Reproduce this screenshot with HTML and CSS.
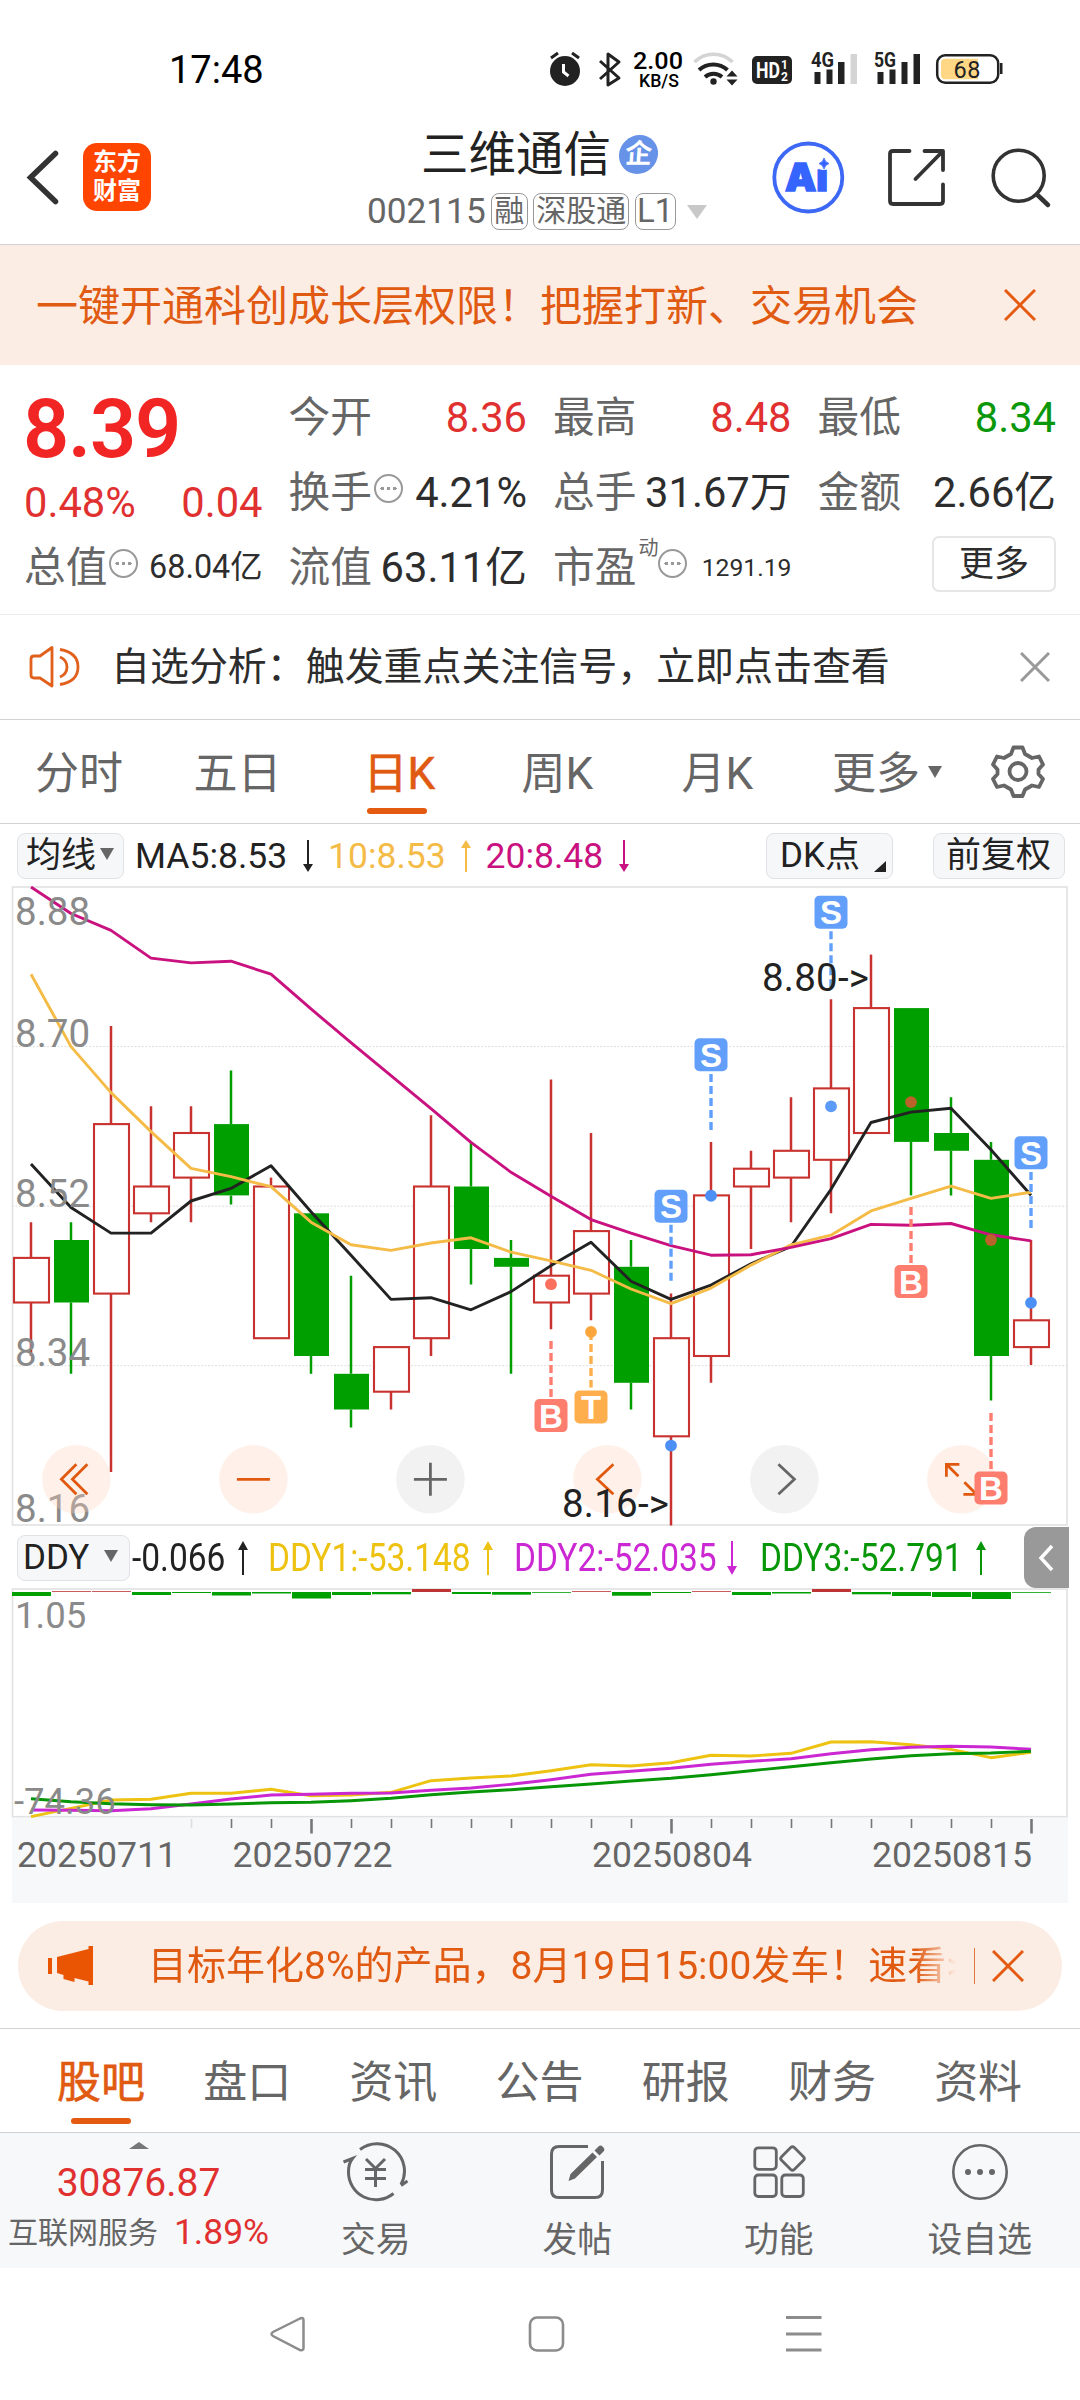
FILE: index.html
```html
<!DOCTYPE html>
<html lang="zh-CN">
<head>
<meta charset="utf-8">
<title>三维通信 002115</title>
<link rel="stylesheet" href="styles.css">
</head>
<body>
<div class="screen">

<div class="status">
  <span class="clock">17:48</span>
  <svg class="status-icons" viewBox="540 44 480 46" width="480" height="46">
    <g fill="#222"><circle cx="565" cy="71" r="15"/></g>
    <path d="M551 58l7-5M579 58l-7-5" stroke="#222" stroke-width="3" fill="none"/>
    <path d="M563.500 64v8l5 4" stroke="#fff" stroke-width="3" fill="none"/>
    <path d="M600 61l19 17-11 7V54l11 8-19 17" stroke="#222" stroke-width="3" fill="none" stroke-linejoin="round"/>
    <text x="633" y="69" font-size="23" font-weight="500" textLength="50" lengthAdjust="spacingAndGlyphs">2.00</text>
    <text x="639" y="87" font-size="18" font-weight="500" textLength="40" lengthAdjust="spacingAndGlyphs">KB/S</text>
    <g fill="none" stroke-width="3.500">
      <path d="M694.500 62a27 27 0 0 1 38 0" stroke="#d4d4d4"/>
      <path d="M699 70a21 21 0 0 1 28.500 0" stroke="#222" stroke-width="4"/>
      <path d="M705 77a13 13 0 0 1 17 0" stroke="#222" stroke-width="4"/>
    </g>
    <circle cx="713.500" cy="81.500" r="3.200" fill="#222"/>
    <path d="M726.500 76.500l5.500-6 5.500 6zM726.500 79.500l5.500 6 5.500-6z" fill="#222"/>
    <rect x="752" y="56" width="40" height="28" rx="5" fill="#222"/>
    <text x="756" y="78" font-size="22" font-weight="700" fill="#fff" textLength="24" lengthAdjust="spacingAndGlyphs">HD</text>
    <text x="781" y="69" font-size="12" font-weight="700" fill="#fff">1</text>
    <text x="781" y="81" font-size="12" font-weight="700" fill="#fff">2</text>
    <g fill="#222">
      <path d="M814.500 72h6v12h-6zM826.500 69.500h6v14.500h-6zM838 62h6.500v22H838z"/>
      <path d="M877.500 72h6v12h-6zM889.500 69.500h6v14.500h-6zM901.500 62h6v22h-6zM913.500 54h6.500v30h-6.500z"/>
    </g>
    <path d="M850.500 54h6.500v30h-6.500z" fill="#d4d4d4"/>
    <text x="811" y="66.500" font-size="19.500" font-weight="700" fill="#222" textLength="23" lengthAdjust="spacingAndGlyphs">4G</text>
    <text x="874" y="66.500" font-size="19.500" font-weight="700" fill="#222" textLength="22" lengthAdjust="spacingAndGlyphs">5G</text>
    <rect x="937.200" y="55.200" width="61" height="27.600" rx="8" fill="#fff" stroke="#222" stroke-width="2.500"/>
    <path d="M945 58.700h33v20.600h-33a4 4 0 0 1-4-4V62.700a4 4 0 0 1 4-4z" fill="#ffd785"/>
    <path d="M1000 63h2.500v11h-2.500z" fill="#222"/>
    <text x="953.500" y="78" font-size="23.500" fill="#222" textLength="27">68</text>
  </svg>
</div>

<header class="header">
  <svg viewBox="20 143 50 68" width="50" height="68"><path d="M55.500 153.500L30.500 177.500l25 24" fill="none" stroke="#333" stroke-width="5.500" stroke-linecap="round"/></svg>
  <div class="brand"><span>东方</span><span>财富</span></div>
  <div class="stock">
    <div class="stock-name">三维通信<i class="corp">企</i></div>
    <div class="stock-code">002115<b class="tag tag-1">融</b><b class="tag tag-3">深股通</b><b class="tag tag-2">L1</b><i class="drop"></i></div>
  </div>
  <svg class="ai" viewBox="772 141 73 73" width="73" height="73">
    <circle cx="808.300" cy="177.500" r="34" fill="none" stroke="#3c68f5" stroke-width="3.800"/>
    <text x="785" y="190.500" font-size="39" font-weight="900" fill="#3664ff" stroke="#3664ff" stroke-width="1.500" textLength="43" lengthAdjust="spacingAndGlyphs" class="ai-text">Ai</text>
    <circle cx="823.500" cy="162" r="8" fill="#fff"/>
    <path d="M824 158q1 4.500 5 5.500-4 1-5 5.500-1-4.500-5-5.500 4-1 5-5.500z" fill="#3664ff" stroke="#3664ff" stroke-width=".8"/>
  </svg>
  <svg class="share" viewBox="886 146 62 62" width="62" height="62"><path d="M909.500 151H893q-3 0-3 3v47q0 3 3 3h47q3 0 3-3v-16.500M924.500 151H943v19M942 152l-26.500 27" fill="none" stroke="#333" stroke-width="3.800" stroke-linecap="round" stroke-linejoin="round"/></svg>
  <svg class="search" viewBox="988 144 64 64" width="64" height="64"><circle cx="1018.700" cy="174.700" r="25.500" fill="none" stroke="#333" stroke-width="3.600"/><path d="M1037 193.500l11 10.500" stroke="#333" stroke-width="4.500" stroke-linecap="round"/></svg>
</header>

<div class="banner">
  <span>一键开通科创成长层权限！把握打新、交易机会</span>
  <svg viewBox="0 0 32 32" width="32" height="32"><path d="M1 1l30 30M31 1L1 31" stroke="#e35a10" stroke-width="3"/></svg>
</div>

<section class="quote">
  <div class="price">
    <div class="last">8.39</div>
    <div class="delta"><span>0.48%</span><span>0.04</span></div>
  </div>
  <div class="cell"><label>今开</label><b class="up">8.36</b></div>
  <div class="cell"><label>最高</label><b class="up">8.48</b></div>
  <div class="cell"><label>最低</label><b class="down">8.34</b></div>
  <div class="cell"><label>换手<i class="info"></i></label><b>4.21%</b></div>
  <div class="cell"><label>总手</label><b>31.67万</b></div>
  <div class="cell"><label>金额</label><b>2.66亿</b></div>
  <div class="cell"><label>总值<i class="info"></i></label><b class="mid">68.04亿</b></div>
  <div class="cell"><label>流值</label><b>63.11亿</b></div>
  <div class="cell"><label>市盈<sup>动</sup><i class="info"></i></label><b class="small">1291.19</b></div>
  <div class="cell end"><span class="more">更多</span></div>
</section>

<div class="notice">
  <svg viewBox="28 643 54 46" width="54" height="46"><g fill="none" stroke="#e0601c" stroke-width="2.800" stroke-linejoin="round"><path d="M52 646.500V685L40 677h-6q-3 0-3-3v-16q0-3 3-3h6z"/><path d="M60 656q7 3 7 10t-7 10M60 648.500q18 3 18 17.500t-18 17.500"/></g></svg>
  <span>自选分析：触发重点关注信号，立即点击查看</span>
  <svg viewBox="0 0 30 30" width="30" height="30"><path d="M1 1l28 28M29 1L1 29" stroke="#999" stroke-width="3"/></svg>
</div>

<nav class="periods">
  <span>分时</span><span>五日</span><span class="on">日K</span><span>周K</span><span>月K</span><span>更多<i class="tri"></i></span>
  <svg viewBox="991 744 54 56" width="54" height="56"><g fill="none" stroke="#666" stroke-width="3.800" stroke-linejoin="round"><path d="M1013.500 747.500h9l2.500 6.500 7 4 7-1.500 4 8-4.500 5v4.500l4.500 5-4 8-7-1.500-7 4-2.500 6.500h-9l-2.500-6.500-7-4-7 1.500-4-8 4.500-5v-4.500l-4.500-5 4-8 7 1.500 7-4z"/><circle cx="1018" cy="771.500" r="8.500"/></g></svg>
</nav>

<div class="legend ma">
  <span class="pill sel">均线<i class="tri"></i></span>
  <span class="ma5">MA5:8.53</span><svg viewBox="0 0 12 32" width="12" height="32" fill="#222"><path d="M5 0h2v24h4L6 32 1 24h4z"/></svg>
  <span class="ma10">10:8.53</span><svg viewBox="0 0 12 32" width="12" height="32" fill="#f5bb47"><path d="M5 32h2V8h4L6 0 1 8h4z"/></svg>
  <span class="ma20">20:8.48</span><svg viewBox="0 0 12 32" width="12" height="32" fill="#c9117f"><path d="M5 0h2v24h4L6 32 1 24h4z"/></svg>
  <span class="pill dk">DK点<i class="corner"></i></span>
  <span class="pill fq">前复权</span>
</div>

<svg class="chart" id="kline" viewBox="0 886 1080 641" width="1080" height="641"></svg>

<div class="legend ddy">
  <span class="pill ind">DDY<i class="tri"></i></span>
  <span class="val v0">-0.066</span><svg viewBox="0 0 12 34" width="12" height="34" fill="#222"><path d="M5 34h2V9h4L6 0 1 9h4z"/></svg>
  <span class="val v1">DDY1:-53.148</span><svg viewBox="0 0 12 34" width="12" height="34" fill="#edc211"><path d="M5 34h2V9h4L6 0 1 9h4z"/></svg>
  <span class="val v2">DDY2:-52.035</span><svg viewBox="0 0 12 34" width="12" height="34" fill="#cb27d2"><path d="M5 0h2v25h4L6 34 1 25h4z"/></svg>
  <span class="val v3">DDY3:-52.791</span><svg viewBox="0 0 12 34" width="12" height="34" fill="#079607"><path d="M5 34h2V9h4L6 0 1 9h4z"/></svg>
  <span class="fold"><svg viewBox="0 0 16 28" width="16" height="28"><path d="M14 2L3 14l11 12" fill="none" stroke="#fff" stroke-width="3.500"/></svg></span>
</div>

<svg class="chart" id="ddy" viewBox="0 1588 1080 316" width="1080" height="316"></svg>

<div class="promo">
  <svg viewBox="46 1944 50 44" width="50" height="44" fill="#ea5504"><path d="M48 1958h4v16h-4zM57 1957l31.500-8v-3H93v39h-4.500v-3.500l-14-3.500v4l-11-3v-4l-6.500-2z"/></svg>
  <span class="promo-text">目标年化8%的产品，8月19日15:00发车！速看&gt;&gt;</span>
  <i class="bar"></i>
  <svg viewBox="0 0 32 32" width="32" height="32"><path d="M1 1l30 30M31 1L1 31" stroke="#e35a10" stroke-width="3"/></svg>
</div>

<nav class="sections">
  <span class="on">股吧</span><span>盘口</span><span>资讯</span><span>公告</span><span>研报</span><span>财务</span><span>资料</span>
</nav>

<footer class="dock">
  <div class="index">
    <i class="caret"></i>
    <div class="index-val">30876.87</div>
    <div class="index-row"><span>互联网服务</span><b>1.89%</b></div>
  </div>
  <div class="act"><svg viewBox="341 2140 70 62" width="70" height="62"><g fill="none" stroke="#666" stroke-width="3"><path d="M360 2149.500A27.500 27.500 0 0 1 401 2184.500M343.500 2162l9-3.500q-4 5-4 13a27.500 27.500 0 0 0 45 22M401 2185.500l6.500-4.500"/><path d="M366 2159l9.500 9.500 9.500-9.500M375.500 2168v19M365 2169.500h21M365 2178.500h21"/></g></svg><span>交易</span></div>
  <div class="act"><svg viewBox="542 2140 70 62" width="70" height="62"><path d="M588 2146.500h-29q-7.500 0-7.500 7.500v36q0 7.500 7.500 7.500h36q7.500 0 7.500-7.500v-29" fill="none" stroke="#666" stroke-width="3"/><path d="M568.500 2181l2-7 22-21.500 4.500 4.500-22 21.500zM594.500 2150.500l4-4q2-2 4.500.500t.500 4.500l-4 4z" fill="#666"/></svg><span>发帖</span></div>
  <div class="act"><svg viewBox="743 2140 70 62" width="70" height="62"><g fill="none" stroke="#666" stroke-width="2.800"><rect x="753.800" y="2147.800" width="21.500" height="21.500" rx="3.500"/><rect x="753.800" y="2175" width="21.500" height="21.500" rx="3.500"/><rect x="780.800" y="2175" width="21.500" height="21.500" rx="3.500"/><rect x="782.500" y="2149.500" width="18" height="18" rx="2.500" transform="rotate(45 791.500 2158.500)"/></g></svg><span>功能</span></div>
  <div class="act"><svg viewBox="944 2140 70 62" width="70" height="62"><circle cx="979" cy="2172" r="26.700" fill="none" stroke="#666" stroke-width="2.600"/><g fill="#666"><circle cx="967" cy="2172" r="3"/><circle cx="979" cy="2172" r="3"/><circle cx="991" cy="2172" r="3"/></g></svg><span>设自选</span></div>
</footer>

<div class="sysnav">
  <svg viewBox="268 2314 40 40" width="40" height="40"><path d="M300 2318.500l-27 13.500q-3 2 0 4l27 14q3.500 1 3.500-2v-28q0-3-3.500-1.500z" fill="none" stroke="#8c8c8c" stroke-width="2.500"/></svg>
  <svg viewBox="526 2314 40 40" width="40" height="40"><rect x="530" y="2317.500" width="33" height="33" rx="7" fill="none" stroke="#8c8c8c" stroke-width="2.600"/></svg>
  <svg viewBox="784 2314 40 40" width="40" height="40"><path d="M786 2317.500h35.500M786 2334h35.500M786 2350h35.500" stroke="#8c8c8c" stroke-width="2.800"/></svg>
</div>

</div>
<script src="chart.js"></script>
</body>
</html>
```
FILE: styles.css
```css
* { box-sizing: border-box; }
body { margin: 0; background: #fff; font-family: Roboto, "Noto Sans CJK SC", sans-serif; color: #333; }
i, b { font-style: normal; font-weight: 400; }
svg { display: block; flex: none; }
svg text { font-family: Roboto, "Noto Sans CJK SC", sans-serif; }
.screen { width: 1080px; height: 2400px; overflow: hidden; background: #fff; white-space: nowrap; }

.status { height: 110px; display: flex; align-items: flex-start; padding: 44px 0 0 169px; }
.clock { width: 371px; font-size: 38px; line-height: 52px; color: #000; }

.header { height: 135px; display: flex; align-items: center; padding-left: 20px; border-bottom: 1.500px solid #cfd3d6; }
.brand { width: 68px; height: 68px; margin-left: 13px; border-radius: 14px; background: #ff4500; color: #fff; font-size: 24px; font-weight: 700; line-height: 29px; display: flex; flex-direction: column; align-items: center; justify-content: center; }
.stock { width: 345px; margin-left: 216px; height: 134px; }
.stock-name { display: flex; align-items: center; height: 60px; margin-top: 15px; padding-left: 54px; font-size: 47.500px; line-height: 60px; color: #222; }
.corp { width: 39px; height: 39px; margin: -2px 0 0 8px; border-radius: 50%; background: #6692e8; color: #fff; font-size: 27px; line-height: 39px; text-align: center; font-weight: 700; transform: skewX(-4deg); }
.stock-code { display: flex; align-items: center; height: 37px; margin-top: 8px; font-size: 35.200px; line-height: 37px; color: #666; }
.tag { height: 37px; border: 1.500px solid #999; border-radius: 8px; margin-left: 5.500px; font-size: 30px; line-height: 34px; text-align: center; }
.tag-1 { width: 37px; margin-left: 5px; }
.tag-3 { width: 96px; }
.tag-2 { width: 41px; font-size: 33px; }
.drop { border: 10.500px solid transparent; border-top: 14px solid #c8c8c8; border-bottom: 0; margin-left: 11px; }
.ai { margin-left: 60px; }
.ai-text { font-family: Inter, Roboto, sans-serif; }
.share { margin-left: 41px; }
.search { margin-left: 40px; }

.banner { height: 120px; background: #fcede4; color: #e05a12; display: flex; align-items: center; justify-content: space-between; padding: 4px 44px 0 36px; font-size: 42px; line-height: 60px; }
.banner svg { margin-bottom: 5px; }

.quote { height: 250px; padding: 15px 24px 0; border-bottom: 1.500px solid #ebebeb; display: grid; grid-template-columns: repeat(4, 238.500px); grid-template-rows: repeat(3, 75px); column-gap: 26px; }
.price { grid-row: span 2; color: #f22525; }
.last { font-size: 81px; font-weight: 600; line-height: 99px; letter-spacing: -1.200px; margin-left: -1px; }
.delta { display: flex; justify-content: space-between; font-size: 41.700px; line-height: 48px; color: #e03030; }
.cell { display: flex; align-items: center; justify-content: space-between; font-size: 41.700px; line-height: 75px; }
.cell.end { justify-content: flex-end; }
.cell label { display: flex; align-items: center; color: #666; }
.cell b { color: #2d2d2d; }
.cell b.up { color: #e03030; }
.cell b.down { color: #0a980a; }
.cell b.mid { font-size: 32.300px; }
.cell b.small { font-size: 24.700px; }
.cell sup { font-size: 20px; line-height: 20px; align-self: flex-start; margin: 8px -2px 0 2px; width: 20px; }
.info { width: 29px; height: 29px; margin: -9px 0 0 2px; border: 2px solid #999; border-radius: 50%; background: radial-gradient(circle 2px at 50% 50%, #999 90%, transparent), radial-gradient(circle 2px at 25% 50%, #999 90%, transparent), radial-gradient(circle 2px at 75% 50%, #999 90%, transparent); }
.more { width: 124px; height: 56px; margin-top: -8px; border: 2px solid #e6e6e6; border-radius: 7px; font-size: 35px; line-height: 53px; text-align: center; color: #2d2d2d; }

.notice { height: 105px; display: flex; align-items: center; padding: 0 30px 0 28px; border-bottom: 1.500px solid #cfd3d6; font-size: 38.950px; line-height: 60px; color: #2d2d2d; }
.notice span { margin-left: 29px; flex: 1; }

.periods { height: 104px; display: grid; grid-template-columns: 158.500px 170px 158px 160px 150.500px 158.500px 54px; align-items: center; padding-left: 35px; border-bottom: 1.500px solid #cfd3d6; font-size: 44px; line-height: 103px; color: #666; }
.periods span { position: relative; padding-top: 3px; height: 104px; }
.on { color: #e05a12; -webkit-text-stroke: .6px #e05a12; }
.on::after { content: ""; position: absolute; left: 3px; bottom: 10px; width: 60px; height: 6.500px; border-radius: 3px; background: #e35a10; }
.tri { display: inline-block; border: 7.500px solid transparent; border-top: 12px solid #666; border-bottom: 0; margin-left: 8px; vertical-align: 9px; }
.periods .tri { vertical-align: 11px; }

.legend { display: grid; align-items: center; font-size: 35.500px; line-height: 44px; color: #222; }
.ma { height: 62px; grid-template-columns: 107px 11px 167px 12px 14px 132px 12px 13.500px 132.500px 12px 136px 126.500px 40px 132px; padding: 2px 0 0 17px; }
.pill { height: 46px; border: 1.500px solid #e0e2e6; border-radius: 8px; background: #f6f7f9; line-height: 43px; position: relative; }
.sel { padding-left: 8px; grid-column: 1; font-size: 35px; }
.sel .tri, .ind .tri { margin-left: 4px; vertical-align: 7px; }
.ma5 { grid-column: 3; }
.ma5 + svg { grid-column: 4; }
.ma10 { grid-column: 6; color: #f5bb47; }
.ma10 + svg { grid-column: 7; }
.ma20 { grid-column: 9; color: #c9117f; }
.ma20 + svg { grid-column: 10; }
.dk { grid-column: 12; padding-left: 13px; font-size: 35px; }
.fq { grid-column: 14; text-align: center; font-size: 35px; }
.corner { position: absolute; right: 6px; bottom: 6px; border-left: 12px solid transparent; border-bottom: 11px solid #222; }
.chart { display: block; }

.ddy { height: 61px; grid-template-columns: 113px 2px 105px 12px 19px 214px 12px 19.500px 212.500px 12px 21.500px 215.500px 12px 36.500px 45px; padding-left: 17px; }
.ind { grid-column: 1; padding-left: 5px; font-size: 35px; }
.ind .tri { margin-left: 15px; }
.val { font-size: 38px; transform: scaleX(.882); transform-origin: 0 50%; width: 200px; }
.v0 { grid-column: 3; }
.v0 + svg { grid-column: 4; }
.v1 { grid-column: 6; color: #edc211; }
.v1 + svg { grid-column: 7; }
.v2 { grid-column: 9; color: #cb27d2; }
.v2 + svg { grid-column: 10; }
.v3 { grid-column: 12; color: #079607; }
.v3 + svg { grid-column: 13; }
.fold { grid-column: 15; height: 61px; background: #999; border-radius: 12px 0 0 12px; display: flex; align-items: center; justify-content: center; }

.promo { width: 1044px; height: 90px; margin: 17px 18px; border-radius: 45px; background: #fcede4; color: #e05a12; display: flex; align-items: center; padding: 0 38px 0 28px; font-size: 39px; line-height: 60px; }
.promo-text { width: 808px; margin-left: 52px; overflow: hidden; -webkit-mask-image: linear-gradient(90deg, #000 95%, transparent 100%); mask-image: linear-gradient(90deg, #000 95%, transparent 100%); }
.bar { width: 1.500px; height: 36px; margin: 0 17px 0 18px; background: #e0783c; }

.sections { height: 105px; border-top: 1.500px solid #cfd3d6; border-bottom: 1.500px solid #cfd3d6; display: grid; grid-template-columns: repeat(7, 146.200px); padding-left: 57px; font-size: 44px; line-height: 109px; color: #666; }
.sections span { position: relative; height: 102px; }
.sections .on { color: #e05a12; }
.sections .on::after { left: 14px; bottom: 7px; }

.dock { height: 135px; background: #f7f8fa; display: grid; grid-template-columns: 275px 201.500px 201.500px 201.500px 200.500px; color: #666; }
.index { display: flex; flex-direction: column; align-items: center; padding: 9px 0 0 2px; color: #e03030; }
.caret { border: 10.500px solid transparent; border-bottom: 7px solid #777; border-top: 0; }
.index-val { font-size: 39px; line-height: 46px; margin-top: 11px; }
.index-row { display: flex; align-items: baseline; gap: 16px; line-height: 40px; margin-top: 6px; font-size: 35.500px; }
.index-row span { font-size: 30px; color: #666; transform: translateY(-1px); }
.act { display: flex; flex-direction: column; align-items: center; padding-top: 7px; font-size: 34.800px; line-height: 48px; }
.act span { margin-top: 14px; }

.sysnav { height: 132px; display: flex; gap: 218px; padding: 46px 0 0 268px; }
```
FILE: chart.js
```js
(function () {
  const X0 = 31, STEP = 40;
  const x = i => X0 + STEP * i;
  const RED = '#c8322f', GREEN = '#009f00';
  const BADGE = { S: '#629ffb', B: '#fd7d6e', T: '#ffae4d' };

  // Price panel: grid lines and candles each have their own linear price scale.
  const TOP = 887;
  const grid = p => TOP + (8.88 - p) * 886.5;
  const y = p => +(954.6 + (8.80 - p) * 892).toFixed(1);
  // Averages and markers are stored in 1/2046 price units, offset by 39.
  const u = v => TOP + (v - 39) / 2.306;

  // [rising, high, bodyTop, bodyBottom, low]
  const candles = [
    [1, 8.50, 8.46, 8.41, 8.35], [0, 8.50, 8.48, 8.41, 8.33], [1, 8.72, 8.61, 8.42, 8.22],
    [1, 8.63, 8.54, 8.51, 8.50], [1, 8.63, 8.60, 8.55, 8.50], [0, 8.67, 8.61, 8.53, 8.52],
    [1, 8.55, 8.54, 8.37, 8.37], [0, 8.51, 8.51, 8.35, 8.33], [0, 8.44, 8.33, 8.29, 8.27],
    [1, 8.36, 8.36, 8.31, 8.29], [1, 8.62, 8.54, 8.37, 8.35], [0, 8.59, 8.54, 8.47, 8.43],
    [0, 8.48, 8.46, 8.45, 8.33], [1, 8.66, 8.44, 8.41, 8.38], [1, 8.60, 8.49, 8.42, 8.39],
    [0, 8.48, 8.45, 8.32, 8.29], [1, 8.42, 8.37, 8.26, 8.16], [1, 8.59, 8.53, 8.35, 8.32],
    [1, 8.58, 8.56, 8.54, 8.47], [1, 8.64, 8.58, 8.55, 8.50], [1, 8.75, 8.65, 8.57, 8.51],
    [1, 8.80, 8.74, 8.60, 8.60], [0, 8.74, 8.74, 8.59, 8.53], [0, 8.64, 8.60, 8.58, 8.53],
    [0, 8.59, 8.57, 8.35, 8.30], [1, 8.48, 8.39, 8.36, 8.34]
  ];
  const ma5 = [678, 778, 837, 837, 763, 734, 682, 788, 888, 990, 986, 1014, 972, 912, 858, 948, 990, 957, 908, 868, 736, 582, 558, 549, 645, 750];
  const ma10 = [240, 407, 513, 603, 688, 707, 730, 812, 864, 877, 860, 848, 881, 901, 923, 966, 1000, 964, 911, 864, 842, 786, 757, 729, 757, 743];
  const ma20 = [39, 100, 139, 203, 214, 210, 240, 320, 398, 474, 550, 628, 697, 752, 806, 837, 866, 888, 887, 870, 850, 817, 819, 815, 841, 855];
  // [candle, letter, badge centre, dash start, dash end, dot, dot colour]
  const marks = [
    [13, 'B', 1258, 1086, 1215, 955, '#f9705f'], [14, 'T', 1238, 1065, 1193, 1065, '#fba63c'],
    [16, 'S', 775, 818, 948, 1327, '#4c8ff5'], [17, 'S', 426, 470, 600, 751, '#4c8ff5'],
    [20, 'S', 97, 141, 270, 545, '#5c9bf8'], [22, 'B', 949, 777, 906, 535, '#b9632a'],
    [24, 'B', 1425, 1252, 1381, 853, '#b9632a'], [25, 'S', 652, 696, 826, 998, '#4c8ff5']
  ];

  const line = (vals, fy, color, w) =>
    `<polyline fill="none" stroke="${color}" stroke-width="${w}" stroke-linejoin="round" points="${vals.map((v, i) => x(i) + ',' + fy(v).toFixed(1)).join(' ')}"/>`;

  let s = '<rect x="12.5" y="887" width="1054.5" height="638" fill="none" stroke="#e2e2e2" stroke-width="1.6"/>';
  [8.70, 8.52, 8.34].forEach(p => { s += `<path d="M12 ${grid(p)}H1067" stroke="#ddd" stroke-width="1" stroke-dasharray="2 1.5"/>`; });

  const icons = [
    '<path d="M0-15L-15 0 0 15M11-15L-4 0 11 15"/>', '<path d="M-16.500 0h33"/>',
    '<path d="M-16.500 0h33M0-16.500v33"/>', '<path d="M6-15L-10 0 6 15"/>',
    '<path d="M-6-15L10 0-6 15"/>', '<path d="M-15-2.500V-15H-2M-15-15l12 12M15 2.500V15H2M15 15L3 3"/>'
  ];
  let buttons = '';
  icons.forEach((d, i) => {
    const grey = i === 2 || i === 4;
    buttons += `<g transform="translate(${76.4 + 177 * i} 1479.3)"><circle r="34.3" fill="${grey ? '#d9d9d9' : '#ffd6bf'}" fill-opacity=".33"/><g fill="none" stroke="${grey ? '#666' : '#e0590f'}" stroke-width="2.8">${d}</g></g>`;
  });

  candles.forEach(([up, h, t, b, l], i) => {
    const c = up ? RED : GREEN;
    s += `<path d="M${x(i)} ${y(h)}V${y(t)}M${x(i)} ${y(b)}V${y(l)}" stroke="${c}" stroke-width="2.5"/>`;
    s += up
      ? `<rect x="${x(i) - 17}" y="${y(t)}" width="35" height="${y(b) - y(t)}" fill="#fff" stroke="${c}" stroke-width="2.1"/>`
      : `<rect x="${x(i) - 17}" y="${y(t)}" width="35" height="${y(b) - y(t)}" fill="${c}"/>`;
  });
  s += line(ma5, u, '#222', 2.9) + line(ma10, u, '#f5bb47', 2.9) + line(ma20, u, '#c9117f', 2.9);

  [['8.88', 925], ['8.70', 1046.5], ['8.52', 1206.5], ['8.34', 1366], ['8.16', 1521.5]].forEach(([t, by]) => {
    s += `<text x="15" y="${by}" font-size="38.5" fill="#8a8a8a">${t}</text>`;
  });
  s += buttons;
  marks.forEach(([i, ch, c, d0, d1, dot, dc]) => {
    s += `<path d="M${x(i)} ${u(d0)}V${u(d1)}" stroke="${BADGE[ch]}" stroke-width="3.4" stroke-dasharray="8 4"/>`;
    s += `<circle cx="${x(i)}" cy="${u(dot)}" r="5.9" fill="${dc}"/>`;
    s += `<rect x="${x(i) - 16.5}" y="${u(c) - 16.5}" width="33" height="33" rx="5" fill="${BADGE[ch]}"/>`;
    s += `<text x="${x(i)}" y="${u(c) + 12}" font-size="33" font-weight="700" fill="#fff" text-anchor="middle" style="font-family:'Liberation Sans'">${ch}</text>`;
  });
  s += '<text x="762" y="991" font-size="38.5" fill="#222" textLength="107">8.80-&gt;</text><text x="562" y="1517" font-size="38.5" fill="#222" textLength="107">8.16-&gt;</text>';
  document.getElementById('kline').innerHTML = s;

  // DDY panel: bars hang from the zero line, three trend lines below.
  const bars = [-4, .8, .8, -3, -1, -3.5, -1.5, -6.5, -3, -2.3, 3, -2, -2.7, -.8, .8, -3.7, -1, .8, -3, -1.5, 3, -2.3, -4, -5, -7, -.8];
  const d1 = [950, 925, 900, 898, 880, 880, 868, 887, 885, 877, 842, 834, 828, 812, 794, 798, 788, 766, 768, 760, 726, 725, 734, 748, 773, 757];
  const d2 = [930, 931, 932, 926, 912, 897, 885, 883, 880, 879, 871, 864, 853, 839, 823, 814, 805, 793, 784, 776, 761, 749, 742, 739, 741, 748];
  const d3 = [896, 905, 911, 914, 915, 912, 908, 907, 902, 895, 884, 876, 869, 860, 852, 843, 835, 824, 812, 800, 788, 777, 767, 761, 759, 754];
  const v = n => 1500 + n / 3;
  let d = '<rect x="12" y="1818" width="1056" height="85" fill="#f7f8fa"/><rect x="12.5" y="1589" width="1054.5" height="227.7" fill="none" stroke="#e2e2e2" stroke-width="1.6"/>';
  bars.forEach((b, i) => {
    d += `<rect x="${12 + 40 * i}" y="${b > 0 ? 1592 - b : 1592}" width="39" height="${Math.abs(b)}" fill="${b > 0 ? '#bd3434' : GREEN}"/>`;
  });
  d += '<text x="15" y="1628.3" font-size="36.5" fill="#8a8a8a">1.05</text>';
  d += line(d1, v, '#edc211', 2.9) + line(d2, v, '#cb27d2', 2.9) + line(d3, v, '#079607', 2.9);
  d += '<text x="14" y="1814" font-size="36.5" fill="#8a8a8a">-74.36</text>';
  for (let i = 4; i <= 25; i++) {
    const major = i === 7 || i === 16 || i === 25;
    d += `<path d="M${x(i) + .5} 1819V${major ? 1833.500 : 1828}" stroke="${i === 4 ? '#ddd' : '#777'}" stroke-width="${major ? 2.6 : 1.6}"/>`;
  }
  [['20250711', 17], ['20250722', 232.5], ['20250804', 592], ['20250815', 872]].forEach(([t, tx]) => {
    d += `<text x="${tx}" y="1866.5" font-size="35.6" fill="#666">${t}</text>`;
  });
  document.getElementById('ddy').innerHTML = d;
})();
```
